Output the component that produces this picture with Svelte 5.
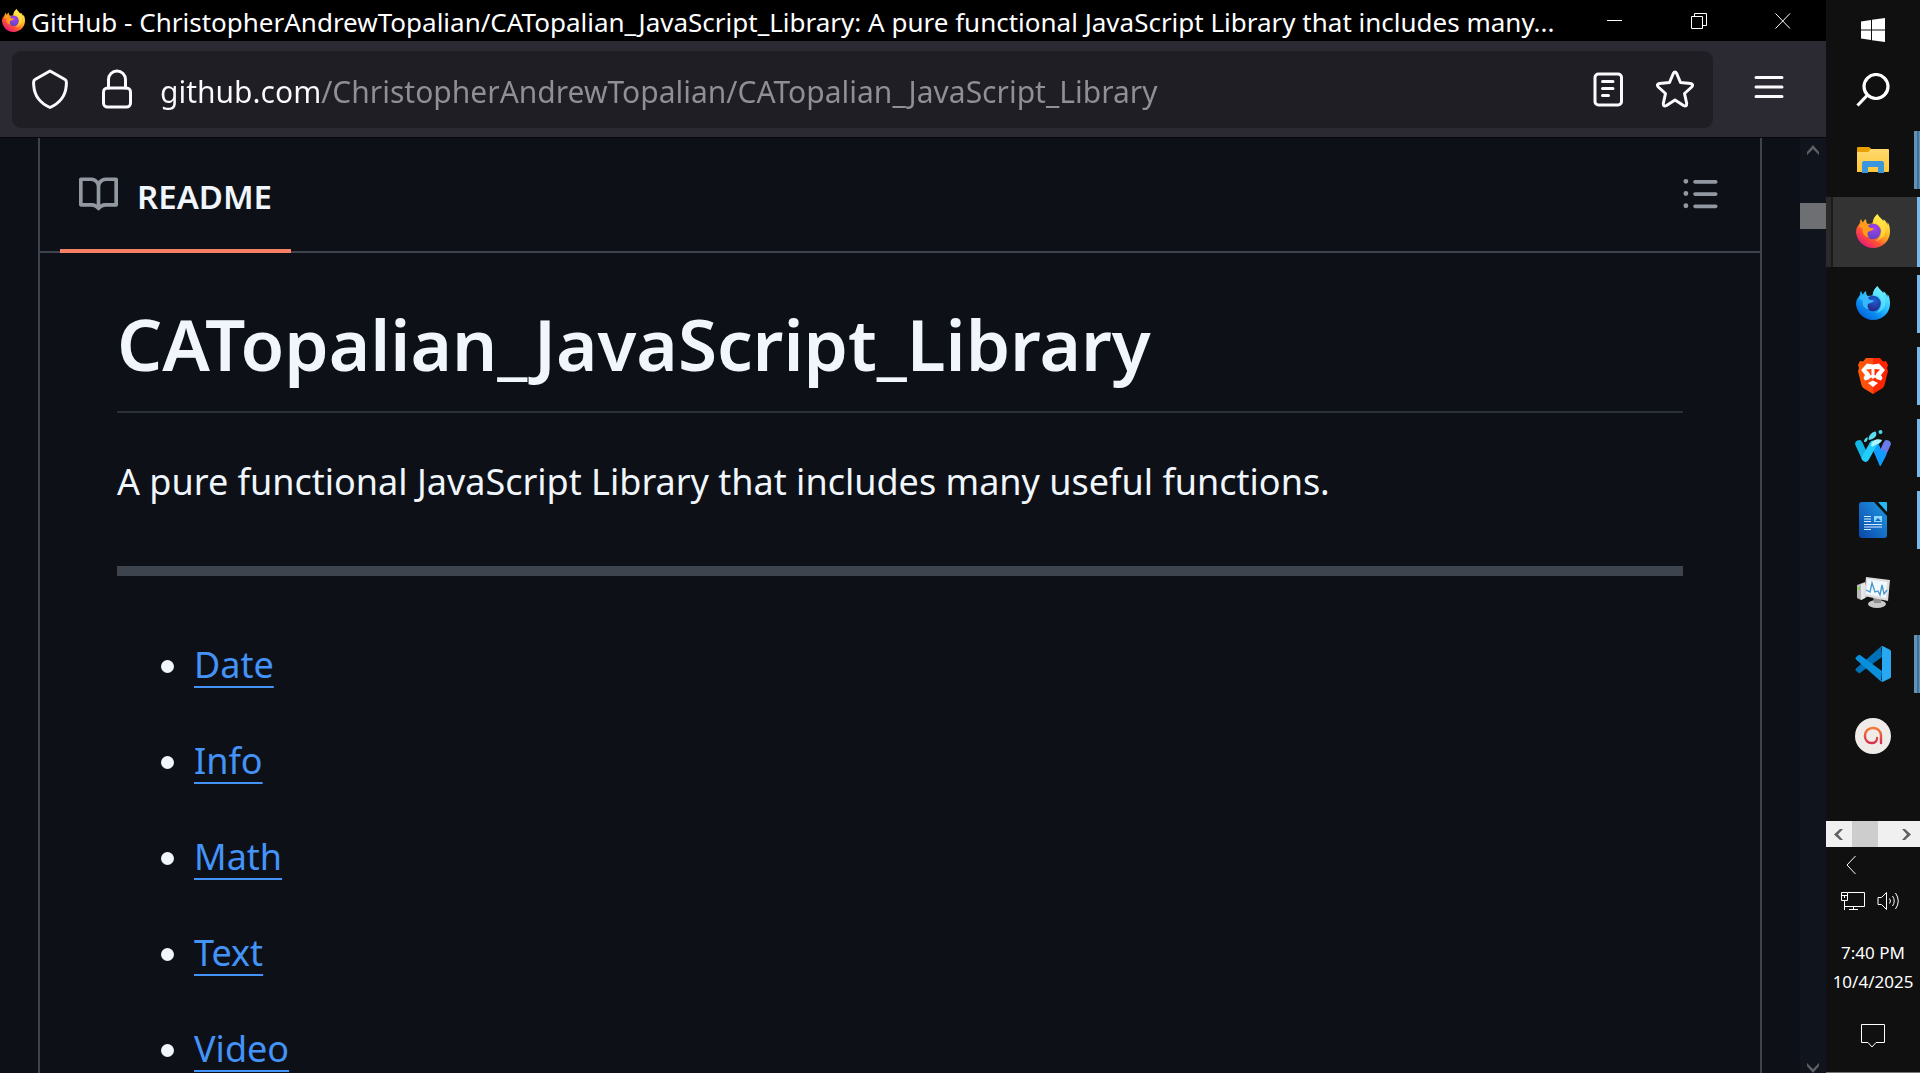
<script>
  const sections = ['Date', 'Info', 'Math', 'Text', 'Video'];
  const apps = [
    { id: 'files', label: 'File Explorer', state: 'multi' },
    { id: 'firefox', label: 'Firefox', state: 'active' },
    { id: 'firefox-dev', label: 'Firefox Developer Edition', state: 'open' },
    { id: 'brave', label: 'Brave', state: 'open' },
    { id: 'waterfox', label: 'Waterfox', state: 'open' },
    { id: 'writer', label: 'Writer', state: 'open' },
    { id: 'monitor', label: 'Resource Monitor', state: 'idle' },
    { id: 'code', label: 'Visual Studio Code', state: 'multi' },
    { id: 'round', label: 'Assistant', state: 'idle' }
  ];
  let url = $state('github.com/ChristopherAndrewTopalian/CATopalian_JavaScript_Library');
</script>

{#snippet fox(id, c)}
  <svg class="fox" viewBox="0 0 34 34" aria-hidden="true">
    <defs>
      <linearGradient id="{id}-body" x1="0.85" y1="0.1" x2="0.2" y2="0.95">
        <stop offset="0" stop-color={c[0]} /><stop offset="0.4" stop-color={c[1]} />
        <stop offset="0.7" stop-color={c[2]} /><stop offset="1" stop-color={c[3]} />
      </linearGradient>
      <radialGradient id="{id}-globe" cx="0.6" cy="0.3" r="0.8">
        <stop offset="0" stop-color={c[4]} /><stop offset="1" stop-color={c[5]} />
      </radialGradient>
    </defs>
    <path fill="url(#{id}-body)" d="M5 5C4 7 4 8 3.500 10C1 12 0 15 0 18.500C1 27 8 34 17 34C26.500 34 34 27 34 17.500C34 13 33 10 31.500 8L31.500 11C30.500 9 29.500 6 27.500 5.500L27.500 7C25 4 23 3 21.500 0C18 3 17 6 16.500 9.500L11.500 10C10.500 9 10 7 10 5C8.500 6 7.500 7 7 8.500C6 7.500 5.500 6 5 5Z" />
    <circle cx="17" cy="17.500" r="7.800" fill="url(#{id}-globe)" />
    <path fill={c[6]} d="M3.500 10C7 8.500 10 9 12 10L12.500 13C14 14 16 14 18 14.500C17 17 14 16.500 12 18C11 20 11.500 22 13.500 23.500C8 23 5.500 18 7 14.500L3.500 13Z" />
    <path fill={c[0]} opacity="0.55" d="M21.500 0C18 3 17 6 16.500 9.500C22 8.500 26 13 25 18C25 22 23 25 20 27C26 26 30 21 29.500 15C29 9 23 5 21.500 0Z" />
  </svg>
{/snippet}

<div class="desktop">
  <div class="window">
    <header class="titlebar">
      {@render fox('title', ['#fff04e', '#ffae1f', '#ff5035', '#e5147f', '#a441ef', '#5145be', '#ff9b18'])}
      <span class="title">GitHub - ChristopherAndrewTopalian/CATopalian_JavaScript_Library: A pure functional JavaScript Library that includes many...</span>
      <div class="controls">
        <button aria-label="Minimize"><svg viewBox="0 0 16 16"><path d="M0 7.500H15" /></svg></button>
        <button aria-label="Restore"><svg viewBox="0 0 16 16"><path d="M.5 3.500H11.500V15.500H.5ZM3.500 3.500V.5H15.500V12.500H11.500" /></svg></button>
        <button aria-label="Close"><svg viewBox="0 0 16 16"><path d="M.5.5L15 15.500M15 .5L.5 15.500" /></svg></button>
      </div>
    </header>

    <nav class="toolbar" aria-label="Navigation">
      <div class="address">
        <button aria-label="Tracking protection">
          <svg viewBox="0 0 40 40"><path d="M20 2L35 10.500C37 11.500 36.500 13 36.200 17C35.500 27 30 34 20 38.500C10 34 4.500 27 3.800 17C3.500 13 3 11.500 5 10.500Z" /></svg>
        </button>
        <button aria-label="Site security">
          <svg viewBox="0 0 40 40"><rect x="6.500" y="19" width="27" height="19" rx="4" /><path d="M11.500 19V10.500A8.500 8.500 0 0 1 28.500 10.500V19" /></svg>
        </button>
        <input aria-label="Address" bind:value={url} spellcheck="false" />
        <button aria-label="Reader view">
          <svg viewBox="0 0 40 40"><rect x="7" y="5" width="26.500" height="31" rx="3.500" /><path d="M14.500 12.500H25M14.500 19.500H25M14.500 26.500H20.500" /></svg>
        </button>
        <button aria-label="Bookmark">
          <svg viewBox="0 0 40 40"><path d="M18.300 4.500Q20 1.500 21.700 4.500L25.500 13.500L35.500 14.500Q39 15.200 36.700 18L29.500 24.500L31.700 34.500Q31.800 38 28.500 36.500L20 31L11.500 36.500Q8.200 38 8.300 34.500L10.500 24.500L3.300 18Q1 15.200 4.500 14.500L14.500 13.500Z" /></svg>
        </button>
      </div>
      <button class="menu" aria-label="Application menu">
        <svg viewBox="0 0 40 40"><path d="M7 8.500H33M7 18H33M7 27.500H33" /></svg>
      </button>
    </nav>

    <div class="viewport">
      <main class="readme">
        <div class="tabs">
          <a class="tab" href="#readme">
            <svg viewBox="0 0 16 16" aria-hidden="true"><path d="M0 1.750A.75.75 0 0 1 .75 1h4.253c1.227 0 2.317.59 3 1.501A3.743 3.743 0 0 1 11.006 1h4.245a.75.75 0 0 1 .75.75v10.500a.75.75 0 0 1-.75.75h-4.507a2.250 2.250 0 0 0-1.591.659l-.622.621a.75.75 0 0 1-1.060 0l-.622-.621A2.250 2.250 0 0 0 5.258 13H.75a.75.75 0 0 1-.75-.75Zm7.251 10.324.004-5.073-.002-2.253A2.250 2.250 0 0 0 5.003 2.500H1.500v9h3.757a3.750 3.750 0 0 1 1.994.574ZM8.755 4.750l-.004 7.322a3.752 3.752 0 0 1 1.992-.572H14.500v-9h-3.495a2.250 2.250 0 0 0-2.250 2.250Z" /></svg>
            README
          </a>
          <button class="outline" aria-label="Outline">
            <svg viewBox="0 0 16 16"><path d="M5.750 2.500h8.500a.75.75 0 0 1 0 1.500h-8.500a.75.75 0 0 1 0-1.500Zm0 5h8.500a.75.75 0 0 1 0 1.500h-8.500a.75.75 0 0 1 0-1.500Zm0 5h8.500a.75.75 0 0 1 0 1.500h-8.500a.75.75 0 0 1 0-1.500ZM2 14a1 1 0 1 1 0-2 1 1 0 0 1 0 2Zm1-6a1 1 0 1 1-2 0 1 1 0 0 1 2 0ZM2 4a1 1 0 1 1 0-2 1 1 0 0 1 0 2Z" /></svg>
          </button>
        </div>
        <article id="readme">
          <h1>CATopalian_JavaScript_Library</h1>
          <p>A pure functional JavaScript Library that includes many useful functions.</p>
          <hr />
          <ul>
            {#each sections as s}
              <li><a href="#{s.toLowerCase()}">{s}</a></li>
            {/each}
          </ul>
        </article>
      </main>
      <div class="scroll" aria-hidden="true">
        <svg viewBox="0 0 26 26"><path d="M7 17V14L13 7L19 14V17L13 11Z" /></svg>
        <div class="thumb"></div>
        <svg class="down" viewBox="0 0 26 26"><path d="M7 16V19L13 26L19 19V16L13 22Z" /></svg>
      </div>
    </div>
  </div>

  <aside class="taskbar">
    <button class="sys" aria-label="Start">
      <svg class="s24" viewBox="0 0 24 24"><path fill="#fff" d="M0 3.500L10 2V11.400H0ZM11 1.800L24 0V11.400H11ZM0 12.600H10V22L0 20.500ZM11 12.600H24V24L11 22.200Z" /></svg>
    </button>
    <button class="sys" aria-label="Search">
      <svg class="s34" viewBox="0 0 34 34" fill="none" stroke="#fff" stroke-width="3.200"><circle cx="20" cy="13.500" r="12" /><path d="M11.500 22L1.500 32.500" /></svg>
    </button>
    <div class="apps">
      {#each apps as app}
        <button class="app {app.state}" aria-label={app.label}>
          {#if app.id === 'files'}
            <svg class="s34" viewBox="0 0 34 34">
              <defs><linearGradient id="folder" x2="0" y2="1"><stop stop-color="#ffd96f" /><stop offset="1" stop-color="#ffc83a" /></linearGradient></defs>
              <path fill="#e6a100" d="M1 5Q1 4 2 4H13L16 6.500L13 10H1Z" />
              <path fill="url(#folder)" d="M1 9H12L15 6H32Q33 6 33 7V28Q33 29 32 29H1Z" />
              <path fill="#3a96dd" d="M8 18H26Q28 18 28 20V30H22V24H12V30H6V20Q6 18 8 18Z" />
            </svg>
          {:else if app.id === 'firefox'}
            {@render fox('fx', ['#fff04e', '#ffae1f', '#ff5035', '#e5147f', '#a441ef', '#5145be', '#ff9b18'])}
          {:else if app.id === 'firefox-dev'}
            {@render fox('dev', ['#6ff0ff', '#2cc0ff', '#0a8df0', '#0560d8', '#1a5fd0', '#2b1f7e', '#36b8ff'])}
          {:else if app.id === 'brave'}
            <svg class="s36" viewBox="0 0 36 36">
              <defs><linearGradient id="brave" x2="1" y2="0"><stop stop-color="#ff5a00" /><stop offset=".5" stop-color="#ff4a14" /><stop offset=".5" stop-color="#ff2a00" /><stop offset="1" stop-color="#ff2000" /></linearGradient></defs>
              <path fill="url(#brave)" d="M11 0H25L28 3.500L31 3L33 7L32 10L33 13L29.500 27Q29 29 27 30.500L18 36L9 30.500Q7 29 6.500 27L3 13L4 10L3 7L5 3L8 3.500Z" />
              <path fill="#fff" d="M12 5.500L18 6.500L24 5.500L30 12L26 17L27.500 20L26 22.500L22.500 21.500L19.500 19L22 14.500L25 11.500L19.500 11V17L21 18.500L18 21L15 18.500L16.500 17V11L11 11.500L14 14.500L16.500 19L13.500 21.500L10 22.500L8.500 20L10 17L6 12Z" />
              <path fill="#fff" d="M13 25L18 22.500L23 25L18 29Z" />
            </svg>
          {:else if app.id === 'waterfox'}
            <svg class="s36" viewBox="0 0 36 36">
              <defs><linearGradient id="wave" x2="1" y2="1"><stop stop-color="#39f0ff" /><stop offset="1" stop-color="#0c8cff" /></linearGradient></defs>
              <g fill="none" stroke-linecap="round" stroke-width="7.500">
                <path stroke="#12b5e4" d="M4 14L10 27" /><path stroke="#6b7be8" d="M32 14L26 27" />
                <path stroke="#109cff" d="M20 15L25.500 28L27.500 24" /><path stroke="#22cdfa" d="M10.500 28L18 14.500" />
              </g>
              <path fill="#a8f4ff" d="M16 15C17 10 22 8 27 10C26 14 21 14 17 17Z" />
              <path fill="#5cdef2" d="M13.500 9C14 5 17 2 20.500 1.500C23 5 20 9 14 10ZM9 12C9 9 11 8 12.500 7C13 10 12 12 9 12Z" />
              <circle cx="25.500" cy="2" r="2" fill="#4ad7ef" />
            </svg>
          {:else if app.id === 'writer'}
            <svg class="s36" viewBox="0 0 36 36">
              <defs><linearGradient id="doc" x1="1" x2="0" y2="1"><stop stop-color="#1f9cdc" /><stop offset=".5" stop-color="#1670c8" /><stop offset="1" stop-color="#0848a8" /></linearGradient></defs>
              <path fill="url(#doc)" d="M7 0H19L32 14V33Q32 36 29 36H7Q4 36 4 33V3Q4 0 7 0Z" /><path fill="#22b9f5" d="M23 0H31Q32 0 32 1V10Z" />
              <path stroke="#d6eaff" d="M9 14.500H16M9 17H16M9 19.500H16M9 22.500H27M9 25H27M9 27.500H16" /><path fill="#8bd8ff" d="M19 14H27V20H19Z" /><path fill="#1668b8" d="M20 19L23 16L24 17L26 19Z" />
            </svg>
          {:else if app.id === 'monitor'}
            <svg class="s34" viewBox="0 0 34 34">
              <path fill="#b9b9b9" d="M1 10L9 7L11 22L5 25L1 23Z" /><path fill="#e6e6e6" d="M5 9L9 8V23L5 25Z" /><path stroke="#6ee01b" stroke-width="2" d="M1.500 13.500H4" />
              <ellipse cx="21" cy="29" rx="9" ry="4" fill="#c9c9c9" /><path fill="#909090" d="M17 22H25V28H18Z" />
              <path fill="#ddd" d="M10 2L34 5L32 26L8 21Z" /><path fill="#eff9ff" d="M11.500 4L31 7L30 23L10 19Z" />
              <path fill="none" stroke="#4596c8" stroke-width="1.300" d="M10 15L14 17L16 8L19 17L22 16L24 20L26 10L28 19L31 15" />
            </svg>
          {:else if app.id === 'code'}
            <svg class="s36" viewBox="0 0 36 36">
              <path fill="#0071b8" d="M26 .5L27 11L5 27Q4 27.500 3 26.500L.7 24.500Q0 23.500 1 22.500Z" />
              <path fill="#0a8fdc" d="M5 9Q4 8.500 3 9.500L.7 11.500Q0 12.500 1 13.500L26 35.500L27 25Z" />
              <path fill="#28a8f3" d="M26 .5Q27 0 28 .3L35 3.700Q36 4.300 36 5.500V30.500Q36 31.700 35 32.300L28 35.700Q26.500 36 26 35L27 34V2Z" />
            </svg>
          {:else}
            <svg class="s36" viewBox="0 0 36 36">
              <defs><linearGradient id="loop" x2="0" y2="1"><stop stop-color="#f47a32" /><stop offset="1" stop-color="#d9304f" /></linearGradient></defs>
              <circle cx="18" cy="18" r="18" fill="#efebe9" />
              <path fill="none" stroke="url(#loop)" stroke-width="2.400" stroke-linecap="round" d="M26 25V17A7.500 7.500 0 0 0 18 10H17.500A7.500 7.500 0 0 0 10 17.500V18.500A6.500 6.500 0 0 0 16.500 25H17.500A4.500 4.500 0 0 0 22 20" />
            </svg>
          {/if}
        </button>
      {/each}
    </div>

    <div class="mini" aria-hidden="true">
      <svg viewBox="0 0 26 26"><path d="M17 8H14L8 13.500L14 19H17L12 13.500Z" /></svg>
      <div class="minithumb"></div>
      <svg class="right" viewBox="0 0 26 26"><path d="M8 8H11L17 13.500L11 19H8L13 13.500Z" /></svg>
    </div>
    <button class="tray-more" aria-label="Show hidden icons">
      <svg viewBox="0 0 12 20"><path d="M10.500 1L2 10L10.500 19" /></svg>
    </button>
    <div class="tray">
      <button aria-label="Network"><svg viewBox="0 0 24 20"><path d="M7 1.500H23.500V15.500H3.500M.5 1.500H6.500V9.500H.5ZM.5 4.500H6.500M3.500 4.500V7M3.500 9.500V19M12.500 15.500V18.500M8 18.500H17" /></svg></button>
      <button aria-label="Volume"><svg viewBox="0 0 24 20"><path d="M1 6.500H4.500L9.500 1.500V18.500L4.500 13.500H1ZM12.500 7.500Q14.500 10 12.500 12.500M15.500 5Q19 10 15.500 15M18.500 2Q24 10 18.500 18" /></svg></button>
    </div>
    <time class="clock" datetime="2025-10-04T19:40"><span>7:40 PM</span><span>10/4/2025</span></time>
    <button class="notify" aria-label="Notifications"><svg viewBox="0 0 24 24"><path d="M.5.5H23.500V18.500H15L11 23L7 18.500H.5Z" /></svg></button>
  </aside>
</div>

<style>
  :global(body) { margin: 0; background: #0d1117; }
  * { box-sizing: border-box; }
  button { display: flex; align-items: center; justify-content: center; padding: 0; border: 0; background: none; color: inherit; font: inherit; }
  svg { display: block; flex: none; }
  .desktop { display: flex; height: 100vh; overflow: hidden; font-family: "Noto Sans", "Open Sans", sans-serif; color: #f0f6fc; }
  .window { flex: 1; min-width: 0; display: flex; flex-direction: column; background: #0d1117; }

  .titlebar { flex: none; display: flex; align-items: center; height: 41px; padding-left: 2px; background: #000; color: #fff; }
  .fox { width: 34px; height: 34px; }
  .titlebar .fox { width: 23px; height: 23px; }
  .title { flex: 1; min-width: 0; padding: 3px 0 0 6px; font-size: 26px; line-height: 38px; white-space: nowrap; overflow: hidden; }
  .controls { flex: none; display: flex; padding-right: 1px; }
  .controls button { width: 84px; height: 38px; }
  .controls svg { width: 16px; height: 16px; fill: none; stroke: #fff; }

  .toolbar { flex: none; display: flex; align-items: center; height: 97px; padding-left: 12px; background: #2b2a33; border-bottom: 1px solid #08080c; }
  .address { flex: 1; min-width: 0; display: flex; align-items: center; height: 77px; padding: 0 5px 0 4px; border-radius: 9px; background: #1f1e25; }
  .address button { width: 67px; height: 77px; }
  .toolbar svg { width: 40px; height: 40px; fill: none; stroke: #fbfbfe; stroke-width: 3; stroke-linecap: round; stroke-linejoin: round; }
  input { flex: 1; min-width: 0; height: 60px; margin-left: 10px; padding: 4px 0 0; border: 0; outline: 0; font: inherit; font-size: 30px; color: transparent; background: linear-gradient(90deg, #fbfbfe 162px, #8f8f94 162px); background-clip: text; }
  .menu { width: 113px; height: 77px; padding-right: 2px; }

  .viewport { flex: 1; min-height: 0; display: flex; overflow: hidden; }
  .readme { flex: 1; min-width: 0; margin: 0 38px; border: solid #3d444d; border-width: 0 2px; }
  .tabs { display: flex; justify-content: space-between; height: 115px; padding: 0 20px; border-bottom: 2px solid #3d444d; }
  .tab { display: flex; align-items: center; gap: 19px; height: 115px; padding: 6px 19px 0; border-bottom: 4px solid #f78166; color: #f0f6fc; font-size: 33px; font-weight: 600; text-decoration: none; }
  .tabs svg { width: 39px; height: 39px; margin-bottom: 4px; fill: #9198a1; }
  .outline { width: 80px; height: 115px; }
  article { padding: 46px 77px 0; }
  h1 { margin: 0; padding-bottom: 22px; border-bottom: 2px solid #2b3139; font-size: 71px; line-height: 90px; font-weight: 600; white-space: nowrap; }
  p { margin: 40px 0 0; font-size: 36px; line-height: 58px; }
  hr { height: 10px; margin: 55px 0 60px; border: 0; background: #3d444d; }
  ul { margin: 0; padding: 0 0 0 77px; list-style: none; }
  li { position: relative; height: 58px; margin-bottom: 38px; font-size: 36px; line-height: 58px; }
  li::before { content: ''; position: absolute; left: -33px; top: 24px; width: 13px; height: 13px; border-radius: 50%; background: #f0f6fc; }
  li a { color: #4493f8; text-decoration: underline 2px; text-underline-offset: 8px; text-decoration-skip-ink: none; }

  .scroll { display: flex; flex-direction: column; width: 26px; background: #10141c; }
  .scroll svg { width: 26px; height: 26px; fill: #5f6064; }
  .thumb { height: 26px; margin-top: 39px; background: #6e6f73; }
  .scroll .down { margin-top: auto; }

  .taskbar { flex: none; display: flex; flex-direction: column; width: 94px; background: #101010; color: #fff; border-bottom: 1px solid #777; }
  .sys { width: 94px; height: 60px; }
  .s24 { width: 24px; height: 24px; }
  .s34 { width: 34px; height: 34px; }
  .s36 { width: 36px; height: 36px; }
  .apps { display: flex; flex-direction: column; gap: 2px; margin-top: 5px; }
  .app { position: relative; width: 94px; height: 70px; }
  .app .fox { margin-bottom: 2px; }
  .active { background: linear-gradient(90deg, #2b2b2b 5px, #1b1b1b 5px, #1b1b1b 7px, #333 7px); }
  .open::after, .multi::after, .active::after { content: ''; position: absolute; right: 0; top: 6px; width: 3px; height: 58px; background: #76b9ed; }
  .active::after { top: 0; height: 70px; }
  .multi::after { width: 6px; background: linear-gradient(90deg, #5e93bd 3px, #46708f 3px, #46708f 5px, #5e93bd 5px); }
  .mini { display: flex; height: 26px; margin-top: auto; background: #f0f0f0; }
  .mini svg { width: 26px; height: 26px; fill: #606060; }
  .minithumb { width: 26px; background: #cdcdcd; }
  .right { margin-left: auto; }
  .tray-more { width: 50px; height: 36px; }
  .tray-more svg { width: 12px; height: 20px; }
  .tray { display: flex; justify-content: center; gap: 12px; height: 36px; padding-right: 5px; }
  .tray svg { width: 24px; height: 20px; }
  .tray-more svg, .tray svg, .notify svg { fill: none; stroke: #fff; stroke-width: 1; }
  .clock { display: flex; flex-direction: column; align-items: center; margin-top: 19px; font-size: 17px; line-height: 29px; white-space: nowrap; }
  .notify { height: 76px; padding-top: 4px; }
  .notify svg { width: 24px; height: 24px; }
</style>
